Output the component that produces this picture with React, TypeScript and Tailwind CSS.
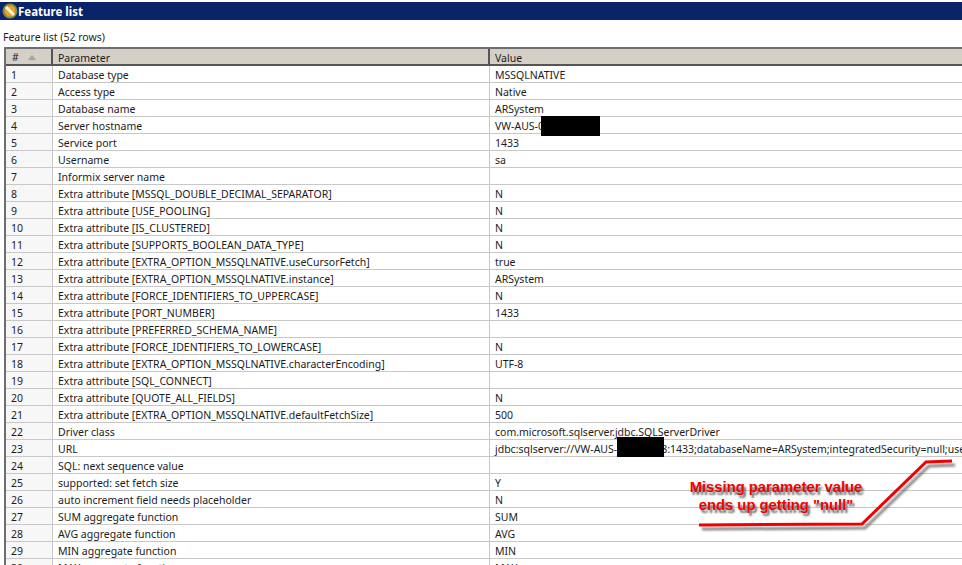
const ROWS: [string, string][] = [
  ["Database type", "MSSQLNATIVE"],
  ["Access type", "Native"],
  ["Database name", "ARSystem"],
  ["Server hostname", "VW-AUS-0"],
  ["Service port", "1433"],
  ["Username", "sa"],
  ["Informix server name", ""],
  ["Extra attribute [MSSQL_DOUBLE_DECIMAL_SEPARATOR]", "N"],
  ["Extra attribute [USE_POOLING]", "N"],
  ["Extra attribute [IS_CLUSTERED]", "N"],
  ["Extra attribute [SUPPORTS_BOOLEAN_DATA_TYPE]", "N"],
  ["Extra attribute [EXTRA_OPTION_MSSQLNATIVE.useCursorFetch]", "true"],
  ["Extra attribute [EXTRA_OPTION_MSSQLNATIVE.instance]", "ARSystem"],
  ["Extra attribute [FORCE_IDENTIFIERS_TO_UPPERCASE]", "N"],
  ["Extra attribute [PORT_NUMBER]", "1433"],
  ["Extra attribute [PREFERRED_SCHEMA_NAME]", ""],
  ["Extra attribute [FORCE_IDENTIFIERS_TO_LOWERCASE]", "N"],
  ["Extra attribute [EXTRA_OPTION_MSSQLNATIVE.characterEncoding]", "UTF-8"],
  ["Extra attribute [SQL_CONNECT]", ""],
  ["Extra attribute [QUOTE_ALL_FIELDS]", "N"],
  ["Extra attribute [EXTRA_OPTION_MSSQLNATIVE.defaultFetchSize]", "500"],
  ["Driver class", "com.microsoft.sqlserver.jdbc.SQLServerDriver"],
  ["URL", "jdbc:sqlserver://VW-AUS-0"],
  ["SQL: next sequence value", ""],
  ["supported: set fetch size", "Y"],
  ["auto increment field needs placeholder", "N"],
  ["SUM aggregate function", "SUM"],
  ["AVG aggregate function", "AVG"],
  ["MIN aggregate function", "MIN"],
  ["MAX aggregate function", "MAX"],
];

function TitleIcon() {
  return (
    <svg width="16" height="16" viewBox="0 0 16 16" className="shrink-0">
      <circle cx="8" cy="8" r="7.5" fill="#7f8f45" />
      <circle cx="8" cy="8" r="5.5" fill="#e8a32e" />
      <path d="M4 4 L12 12" stroke="#fff6dc" strokeWidth="3" />
    </svg>
  );
}

export default function App() {
  return (
    <div className="relative w-[962px] h-[565px] overflow-hidden bg-white text-[10.5px] leading-[17px] text-[#1c1c1c] font-['Noto_Sans','Liberation_Sans',sans-serif]">
      <div className="mt-[2px] h-[18px] bg-[#0a246a] flex items-center pl-[2px] text-white font-bold text-[11.5px]">
        <TitleIcon />
        <span>Feature list</span>
      </div>

      <div className="mt-[9px] mb-[1px] pl-[3px] h-[17px]">Feature list (52 rows)</div>

      <div className="ml-[4px] border-l-2 border-t-2 border-[#6e6e6e]">
        <div className="flex h-[15px] bg-[#d4d0c8] border-b-2 border-[#555555] box-content">
          <div className="w-[47px] shrink-0 pl-[6px] pt-[1px] flex items-center gap-[9px] border-r-2 border-[#555555]">
            #
            <svg width="8" height="5" viewBox="0 0 8 5">
              <path d="M4 0 L8 5 L0 5 Z" fill="#a5a296" />
            </svg>
          </div>
          <div className="w-[437px] shrink-0 pl-[5px] pt-[1px] border-r-2 border-[#555555]">Parameter</div>
          <div className="pl-[5px] pt-[1px]">Value</div>
        </div>
        {ROWS.map(([param, value], i) => (
          <div key={i} className="flex h-[17px] border-b border-[#c8c8c8]">
            <div className="w-[47px] shrink-0 pl-[5px] pt-[1px] bg-[#f7f7f7] border-r border-[#c8c8c8]">{i + 1}</div>
            <div className="w-[437px] shrink-0 pl-[5px] pt-[1px] border-r border-[#c8c8c8] whitespace-nowrap">{param}</div>
            <div className="relative pl-[5px] pt-[1px] whitespace-nowrap">
              {value}
              {i === 22 && (
                <>
                  <span className="inline-block w-[38px]" />
                  8:1433;databaseName=ARSystem;integratedSecurity=null;user=sa
                </>
              )}
              {i === 3 && <div className="absolute left-[51px] top-[-1px] w-[59px] h-[20px] bg-black" />}
              {i === 22 && <div className="absolute left-[127px] top-[-3px] w-[47px] h-[20px] bg-black" />}
            </div>
          </div>
        ))}
      </div>

      <svg width="962" height="565" className="absolute left-0 top-0 pointer-events-none">
        <path
          d="M699 525 L862 524 L926 462 L952 461"
          transform="translate(3 4)"
          fill="none"
          stroke="#555555"
          strokeOpacity="0.7"
          strokeWidth="3"
          className="blur-[1px]"
        />
        <path d="M699 525 L862 524 L926 462 L952 461" fill="none" stroke="#f00000" strokeWidth="3" />
      </svg>
      <div className="absolute left-[676px] top-[478px] w-[200px] text-center font-bold text-[14.8px] leading-[18px] text-[#f00000] font-['Liberation_Sans',sans-serif] [text-shadow:2px_3px_2px_#666666]">
        Missing parameter value
        <br />
        ends up getting "null"
      </div>
    </div>
  );
}
